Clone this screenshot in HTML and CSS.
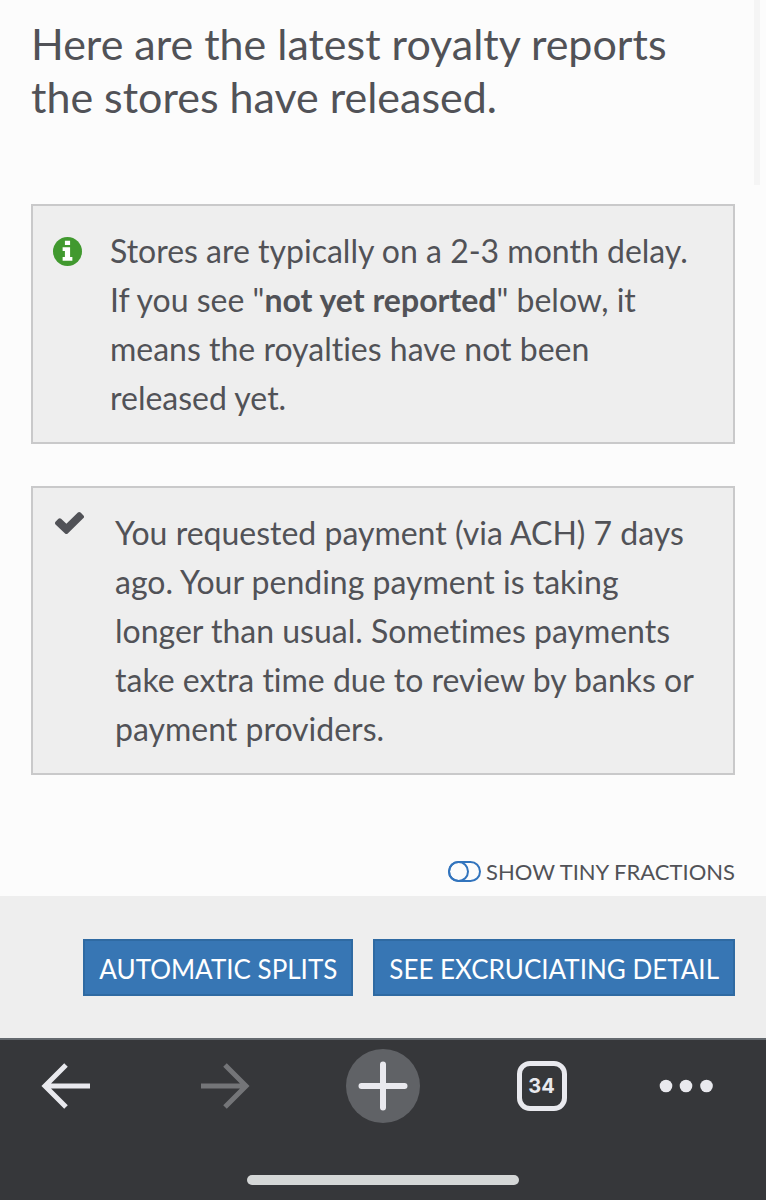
FILE: index.html
```html
<!DOCTYPE html>
<html lang="en">
<head>
<meta charset="utf-8">
<meta name="viewport" content="width=device-width, initial-scale=1">
<title>Royalty reports</title>
<link rel="stylesheet" href="styles.css">
</head>
<body>
<main class="page">
  <div class="content">
    <h1 class="title">Here are the latest royalty reports the stores have released.</h1>
    <section class="notice">
      <svg class="notice-icon" viewBox="0 0 28 28" aria-hidden="true">
        <circle cx="14" cy="14" r="14" fill="#41992f"/>
        <path fill="#fff" d="M11.500 3.500h5v4.300h-5zM9.300 9.800h7.200v9.500h2.200v3.700H9.300v-3.700h2.200v-5.800H9.300z"/>
      </svg>
      <p class="notice-text">Stores are typically on a 2-3 month delay. If you see "<strong>not yet reported</strong>" below, it means the royalties have not been released yet.</p>
    </section>
    <section class="notice notice-payment">
      <svg class="notice-icon" viewBox="0 0 28 28" aria-hidden="true">
        <path fill="#515257" d="M.5 11.300 3.300 8.500q1.300-1.100 2.600 0L11 13.300 22.100 2.400q1.300-1.100 2.600 0l2.800 2.800q1.100 1.300 0 2.600L12.300 22.600q-1.300 1.100-2.600 0L.5 13.900q-1.100-1.300 0-2.600z"/>
      </svg>
      <p class="notice-text">You requested payment (via ACH) 7 days ago. Your pending payment is taking longer than usual. Sometimes payments take extra time due to review by banks or payment providers.</p>
    </section>
    <label class="fractions"><input class="switch" type="checkbox">SHOW TINY FRACTIONS</label>
  </div>
  <div class="actions">
    <button class="action" type="button">AUTOMATIC SPLITS</button>
    <button class="action" type="button">SEE EXCRUCIATING DETAIL</button>
  </div>
</main>
<footer class="browser-bar">
  <nav class="browser-nav" aria-label="Browser">
    <button class="nav-button" type="button" aria-label="Back">
      <svg width="50" height="46" viewBox="0 0 50 46" fill="none" stroke="#e9e9ee" stroke-width="5"><path d="M49 23H5M25 2 4 23l21 21"/></svg>
    </button>
    <button class="nav-button" type="button" aria-label="Forward" disabled>
      <svg width="50" height="46" viewBox="0 0 50 46" fill="none" stroke="#747578" stroke-width="5"><path d="M1 23h44M25 2l21 21-21 21"/></svg>
    </button>
    <button class="nav-button" type="button" aria-label="New tab">
      <svg width="74" height="74" viewBox="0 0 74 74"><circle cx="37" cy="37" r="37" fill="#606266"/><path d="M15.500 37h43M37 15.500v43" stroke="#e9e9ee" stroke-width="6" stroke-linecap="round"/></svg>
    </button>
    <button class="nav-button" type="button" aria-label="34 open tabs"><span class="tab-count">34</span></button>
    <button class="nav-button nav-more" type="button" aria-label="More">
      <svg width="56" height="14" viewBox="0 0 56 14" fill="#e9e9ee"><circle cx="8" cy="7" r="6.300"/><circle cx="28" cy="7" r="6.300"/><circle cx="48.500" cy="7" r="6.300"/></svg>
    </button>
  </nav>
  <div class="home-indicator"></div>
</footer>
<div class="scroll-thumb"></div>
</body>
</html>
```
FILE: styles.css
```css
*,
*::before {
  box-sizing: border-box;
}

body {
  margin: 0;
  min-height: 100vh;
  display: flex;
  flex-direction: column;
  background: #fcfcfc;
  color: #515257;
  font-family: Lato, sans-serif;
  font-variant-ligatures: none;
}

button {
  font-family: inherit;
}

.content {
  display: flex;
  flex-direction: column;
  padding: 17px 31px 8px;
}

.title {
  margin: 0 0 81px;
  font-size: 43px;
  line-height: 53px;
  font-weight: 400;
}

.notice {
  display: flex;
  gap: 28px;
  margin-bottom: 42px;
  padding: 20px 32px 20px 20px;
  border: 2px solid #c9c9ca;
  background: #eee;
}

.notice-payment {
  gap: 31px;
  padding-left: 22px;
}

.notice-icon {
  flex: none;
  width: 29px;
  height: 29px;
  margin-top: 11px;
}

.notice-payment .notice-icon {
  margin-top: 2px;
}

.notice-text {
  margin: 0;
  font-size: 32px;
  line-height: 49px;
}

.fractions {
  display: flex;
  align-items: center;
  align-self: flex-end;
  gap: 5px;
  margin-top: 38px;
  font-size: 22px;
  line-height: 33px;
}

.switch {
  appearance: none;
  width: 33px;
  height: 21px;
  margin: 0;
  border: 2px solid #3274bd;
  border-radius: 11px;
}

.switch::before {
  content: "";
  display: block;
  width: 21px;
  height: 21px;
  margin: -2px;
  border: 2px solid #3274bd;
  border-radius: 50%;
}

.switch:checked::before {
  margin-left: 10px;
}

.actions {
  display: flex;
  justify-content: flex-end;
  gap: 20px;
  padding: 43px 31px 42px;
  background: #eee;
}

.action {
  padding: 12px 14px 8px;
  border: 2px solid #2f6aa2;
  background: #3776b4;
  color: #fff;
  font-size: 26px;
  line-height: 33px;
  white-space: nowrap;
}

.browser-bar {
  flex: 1;
  display: flex;
  flex-direction: column;
  align-items: center;
  justify-content: space-between;
  padding: 9px 24px 15px;
  border-top: 2px solid #64696e;
  background: #36373a;
}

.browser-nav {
  align-self: stretch;
  display: flex;
  justify-content: space-between;
}

.nav-button {
  display: flex;
  align-items: center;
  justify-content: center;
  width: 84px;
  height: 74px;
  padding: 0;
  border: 0;
  background: none;
}

.nav-more {
  justify-content: flex-start;
}

.tab-count {
  width: 50px;
  height: 50px;
  border: 5px solid #e9e9ee;
  border-radius: 13px;
  color: #e9e9ee;
  font: 700 20px/40px Inter, sans-serif;
  text-align: center;
}

.home-indicator {
  width: 38%;
  max-width: 273px;
  height: 10px;
  border-radius: 5px;
  background: #d5d7d7;
}

.scroll-thumb {
  position: absolute;
  top: 0;
  right: 6px;
  width: 6px;
  height: 185px;
  background: #f5f5f5;
}
```
